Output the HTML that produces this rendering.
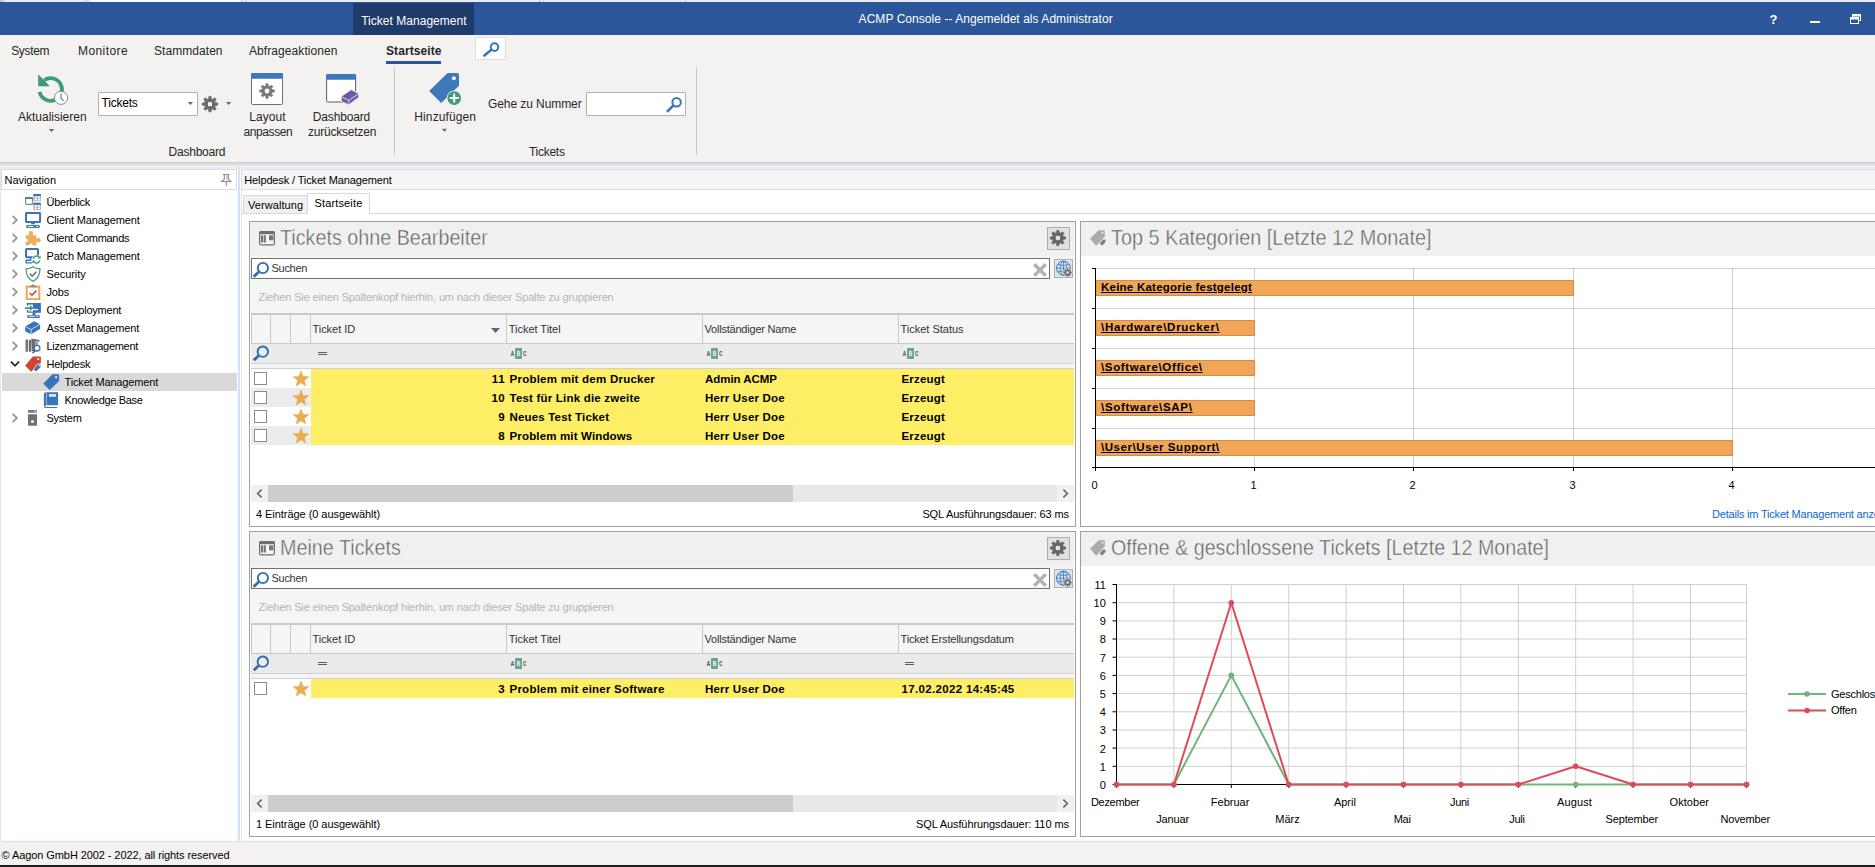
<!DOCTYPE html>
<html lang="de"><head><meta charset="utf-8"><title>ACMP Console</title>
<style>
html,body{margin:0;padding:0;}
body{width:1875px;height:867px;overflow:hidden;position:relative;background:#fff;font-family:"Liberation Sans",sans-serif;font-size:11px;color:#000;}
#app{position:absolute;left:0;top:0;width:1875px;height:867px;overflow:hidden;}
#app div,#app svg,#app span{position:absolute;}
#app span{white-space:nowrap;}
</style></head>
<body><div id="app">
<div style="left:0px;top:0px;width:1875px;height:2px;background:#e9ebee;"></div>
<div style="left:91px;top:0px;width:150px;height:2px;background:#ffffff;"></div>
<div style="left:86px;top:0px;width:1px;height:2px;background:#b9bcc0;"></div>
<div style="left:241px;top:0px;width:1px;height:2px;background:#b9bcc0;"></div>
<div style="left:245px;top:0px;width:1px;height:2px;background:#c9ccd0;"></div>
<div style="left:0px;top:0px;width:4px;height:2px;background:#c9ccd0;"></div>
<div style="left:539px;top:0px;width:1px;height:2px;background:#b9bcc0;"></div>
<div style="left:543px;top:0px;width:1px;height:2px;background:#c9ccd0;"></div>
<div style="left:685px;top:0px;width:1px;height:2px;background:#c3c6ca;"></div>
<div style="left:0px;top:2px;width:1875px;height:33px;background:#2b579a;"></div>
<div style="left:353px;top:3px;width:121px;height:32px;background:#1f3b6b;"></div>
<span style="top:12px;font-size:12px;line-height:18px;color:#fff;letter-spacing:0.027px;left:361.2px;">Ticket Management</span>
<span style="top:10px;font-size:12px;line-height:18px;color:#fff;letter-spacing:0.050px;left:858.6px;">ACMP Console -- Angemeldet als Administrator</span>
<span style="top:10px;font-size:13px;line-height:19px;font-weight:bold;color:#fff;left:1273.6px;width:1000px;text-align:center;">?</span>
<div style="left:1810px;top:21px;width:10px;height:2px;background:#fff;"></div>
<svg style="left:1850px;top:14px;" width="11" height="10" viewBox="0 0 11 10"><rect x="2.5" y="0.5" width="8" height="6" fill="none" stroke="#fff"/><rect x="2.5" y="0.5" width="8" height="2" fill="#fff"/><rect x="0.5" y="3.5" width="8" height="6" fill="#2b579a" stroke="#fff"/><rect x="0.5" y="3.5" width="8" height="2" fill="#fff"/></svg>
<div style="left:0px;top:35px;width:1875px;height:127px;background:#f3f2f1;"></div>
<div style="left:0px;top:162px;width:1875px;height:1px;background:#cfcfcf;"></div>
<div style="left:0px;top:163px;width:1875px;height:1px;background:#d6d6d6;"></div>
<div style="left:0px;top:164px;width:1875px;height:1px;background:#dedede;"></div>
<div style="left:0px;top:165px;width:1875px;height:1px;background:#e6e6e6;"></div>
<div style="left:0px;top:166px;width:1875px;height:1px;background:#eeeeee;"></div>
<div style="left:0px;top:167px;width:1875px;height:2px;background:#e4effa;"></div>
<span style="top:42px;font-size:12px;line-height:18px;color:#262626;letter-spacing:-0.319px;left:11.2px;">System</span>
<span style="top:42px;font-size:12px;line-height:18px;color:#262626;letter-spacing:0.427px;left:78px;">Monitore</span>
<span style="top:42px;font-size:12px;line-height:18px;color:#262626;letter-spacing:0.055px;left:154px;">Stammdaten</span>
<span style="top:42px;font-size:12px;line-height:18px;color:#262626;letter-spacing:0.080px;left:249px;">Abfrageaktionen</span>
<span style="top:42px;font-size:12px;line-height:18px;font-weight:bold;color:#262626;letter-spacing:0.090px;left:386px;">Startseite</span>
<div style="left:386px;top:61px;width:55px;height:3px;background:#2b579a;"></div>
<div style="left:475px;top:37px;width:31px;height:23px;background:#fff;border:1px solid #e1dfdd;box-sizing:border-box;"></div>
<div style="left:394px;top:67px;width:1px;height:88px;background:#c8c6c4;"></div>
<div style="left:696px;top:67px;width:1px;height:88px;background:#c8c6c4;"></div>
<span style="top:108px;font-size:12px;line-height:18px;color:#262626;letter-spacing:-0.008px;left:18px;">Aktualisieren</span>
<span style="top:108px;font-size:12px;line-height:18px;color:#262626;letter-spacing:0.045px;left:249.3px;">Layout</span>
<span style="top:123px;font-size:12px;line-height:18px;color:#262626;letter-spacing:-0.381px;left:243.4px;">anpassen</span>
<span style="top:108px;font-size:12px;line-height:18px;color:#262626;letter-spacing:-0.158px;left:312.8px;">Dashboard</span>
<span style="top:123px;font-size:12px;line-height:18px;color:#262626;letter-spacing:-0.217px;left:308px;">zurücksetzen</span>
<span style="top:143px;font-size:12px;line-height:18px;color:#262626;letter-spacing:-0.213px;left:168.5px;">Dashboard</span>
<span style="top:108px;font-size:12px;line-height:18px;color:#262626;letter-spacing:0.108px;left:414.3px;">Hinzufügen</span>
<span style="top:95px;font-size:12px;line-height:18px;color:#262626;letter-spacing:-0.079px;left:488px;">Gehe zu Nummer</span>
<span style="top:143px;font-size:12px;line-height:18px;color:#262626;letter-spacing:-0.280px;left:529px;">Tickets</span>
<div style="left:98px;top:92px;width:100px;height:24px;background:#fff;border:1px solid #b3b0ad;box-sizing:border-box;"></div>
<span style="top:94px;font-size:12px;line-height:18px;letter-spacing:-0.209px;left:101.5px;">Tickets</span>
<div style="left:586px;top:92px;width:100px;height:24px;background:#fff;border:1px solid #b3b0ad;box-sizing:border-box;"></div>
<svg style="left:475px;top:37px;" width="31" height="23" viewBox="0 0 31 23"><circle cx="19.5" cy="10.1" r="3.8" fill="none" stroke="#3b73b9" stroke-width="2.0"/><line x1="16.34" y1="12.71" x2="8.5" y2="19.2" stroke="#3b73b9" stroke-width="2.6" stroke-linecap="butt"/></svg>
<svg style="left:36px;top:72px;" width="36" height="36" viewBox="0 0 36 36"><path d="M3.6,19.8A11.3,11.3 0 1 0 8.2,8.2" fill="none" stroke="#3f9a76" stroke-width="3.8"/><path d="M2.2,2.2V14.2H13.8Z" fill="#3f9a76"/><circle cx="25" cy="25.8" r="6.6" fill="#fff" stroke="#8a8a8a" stroke-width="1"/><path d="M25,21.6V26.2L27.6,29" fill="none" stroke="#3b73b9" stroke-width="1.1"/></svg>
<svg style="left:40px;top:124px" width="24" height="12" viewBox="0 0 24 12"><path d="M8.8,5.0H14.2L11.5,8.0Z" fill="#6a6a6a"/></svg>
<svg style="left:184px;top:98px;" width="12" height="12" viewBox="0 0 12 12"><path d="M3.7,4.0H9.100000000000001L6.4,7.0Z" fill="#6a6a6a"/></svg>
<svg style="left:200px;top:94px;" width="20" height="20" viewBox="0 0 20 20"><path d="M8.77,4.74 L8.90,2.38 L11.10,2.38 L11.23,4.74 L12.92,5.44 L14.68,3.86 L16.24,5.42 L14.66,7.18 L15.36,8.87 L17.72,9.00 L17.72,11.20 L15.36,11.33 L14.66,13.02 L16.24,14.78 L14.68,16.34 L12.92,14.76 L11.23,15.46 L11.10,17.82 L8.90,17.82 L8.77,15.46 L7.08,14.76 L5.32,16.34 L3.76,14.78 L5.34,13.02 L4.64,11.33 L2.28,11.20 L2.28,9.00 L4.64,8.87 L5.34,7.18 L3.76,5.42 L5.32,3.86 L7.08,5.44Z" fill="#6b6b6b" stroke="#6b6b6b" stroke-width="0.8" stroke-linejoin="round"/><circle cx="10" cy="10.1" r="5.50" fill="#6b6b6b"/><rect x="8" y="8.1" width="4" height="4" fill="#f3f2f1"/></svg>
<svg style="left:222px;top:98px;" width="12" height="12" viewBox="0 0 12 12"><path d="M3.8999999999999995,4.0H9.3L6.6,7.0Z" fill="#6a6a6a"/></svg>
<svg style="left:250px;top:72px;" width="34" height="34" viewBox="0 0 34 34"><rect x="1.5" y="1.5" width="31" height="31" rx="1.2" fill="#fff" stroke="#6e6e6e" stroke-width="1"/><path d="M1,2.2Q1,1 2.2,1H31.8Q33,1 33,2.2V6.7H1Z" fill="#3d78ba"/><path d="M15.84,13.93 L15.97,11.77 L18.03,11.77 L18.16,13.93 L19.76,14.59 L21.38,13.16 L22.84,14.62 L21.41,16.24 L22.07,17.84 L24.23,17.97 L24.23,20.03 L22.07,20.16 L21.41,21.76 L22.84,23.38 L21.38,24.84 L19.76,23.41 L18.16,24.07 L18.03,26.23 L15.97,26.23 L15.84,24.07 L14.24,23.41 L12.62,24.84 L11.16,23.38 L12.59,21.76 L11.93,20.16 L9.77,20.03 L9.77,17.97 L11.93,17.84 L12.59,16.24 L11.16,14.62 L12.62,13.16 L14.24,14.59Z" fill="#7a7a7a" stroke="#7a7a7a" stroke-width="0.8" stroke-linejoin="round"/><circle cx="17" cy="19" r="5.20" fill="#7a7a7a"/><circle cx="17" cy="19" r="2.4" fill="#fff"/></svg>
<svg style="left:325px;top:72px;" width="36" height="36" viewBox="0 0 36 36"><rect x="1.6" y="2.5" width="29" height="27.5" fill="#fff"/><path d="M18,30H2.8Q1.6,30 1.6,28.8V4M30.6,4V19.5" fill="none" stroke="#5a5a5a" stroke-width="1"/><rect x="22" y="26" width="10" height="5" fill="#f3f2f1"/><rect x="28" y="24" width="4" height="3" fill="#f3f2f1"/><path d="M1.1,3.2Q1.1,2 2.3,2H29.9Q31.1,2 31.1,3.2V7.7H1.1Z" fill="#3d78ba"/><path d="M16.2,24.5L26.2,17.6L33.8,21.6V25.4L23.8,32.9L16.2,29.4Z" fill="#6f5aa8" stroke="#f3f2f1" stroke-width="0.9"/><path d="M16.2,24.5L23.8,28.4L33.8,21.6M23.8,28.4V32.9" fill="none" stroke="#e9e4f5" stroke-width="0.9"/></svg>
<svg style="left:427px;top:71px;" width="38" height="38" viewBox="0 0 38 38"><path d="M20.6,2.1H30.2Q32,2.1 32,3.9V14.8L14.2,32L2.2,19.9Z" fill="#3d78ba"/><circle cx="26.9" cy="7.2" r="2" fill="#f3f2f1"/><circle cx="27.2" cy="27.1" r="7.6" fill="#f3f2f1"/><circle cx="27.2" cy="27.1" r="6.8" fill="#3f9a76"/><path d="M27.2,22.6V31.6M22.7,27.1H31.7" stroke="#fff" stroke-width="2"/></svg>
<svg style="left:433px;top:124px" width="24" height="12" viewBox="0 0 24 12"><path d="M8.7,4.8H14.100000000000001L11.4,7.8Z" fill="#6a6a6a"/></svg>
<svg style="left:664px;top:94px;" width="22" height="22" viewBox="0 0 22 22"><circle cx="12.6" cy="8.2" r="4.2" fill="none" stroke="#3b73b9" stroke-width="2.0"/><line x1="9.42" y1="11.38" x2="3" y2="17.8" stroke="#3b73b9" stroke-width="2.6" stroke-linecap="butt"/></svg>
<div style="left:1px;top:169px;width:236px;height:21px;background:#fff;border:1px solid #dcdcdc;box-sizing:border-box;"></div>
<span style="top:172px;font-size:11px;line-height:16px;letter-spacing:-0.048px;left:4.5px;">Navigation</span>
<div style="left:238px;top:167px;width:2px;height:674px;background:#cfe4f9;"></div>
<div style="left:0px;top:167px;width:1px;height:674px;background:#dbe9f7;"></div>
<div style="left:2px;top:373px;width:235px;height:18px;background:#d9d9d9;"></div>
<span style="top:194px;font-size:11px;line-height:16px;letter-spacing:-0.251px;left:46.5px;">Überblick</span>
<svg style="left:25px;top:194px;" width="16" height="16" viewBox="0 0 16 16"><rect x="0.6" y="3.9" width="6.8" height="6.5" rx="0.6" fill="#fff" stroke="#858585" stroke-width="1.1"/><path d="M0,5V4Q0,3.2 0.8,3.2H7.2Q8,3.2 8,4V5Z" fill="#3a76ba"/><rect x="8.2" y="0.1" width="7.8" height="7.2" rx="0.7" fill="#b4b4b4"/><path d="M8.2,2.1V0.9Q8.2,0.1 9,0.1H15.2Q16,0.1 16,0.9V2.1Z" fill="#3a76ba"/><rect x="9.7" y="2.5" width="2.2" height="1.6" fill="#fff"/><rect x="12.9" y="2.5" width="2.2" height="1.6" fill="#fff"/><rect x="9.7" y="4.8999999999999995" width="2.2" height="1.5" fill="#fff"/><rect x="12.9" y="4.8999999999999995" width="2.2" height="1.5" fill="#fff"/><rect x="8.2" y="8.8" width="7.8" height="7.2" rx="0.7" fill="#b4b4b4"/><path d="M8.2,10.8V9.600000000000001Q8.2,8.8 9,8.8H15.2Q16,8.8 16,9.600000000000001V10.8Z" fill="#3a76ba"/><rect x="9.7" y="11.200000000000001" width="2.2" height="1.6" fill="#fff"/><rect x="12.9" y="11.200000000000001" width="2.2" height="1.6" fill="#fff"/><rect x="9.7" y="13.600000000000001" width="2.2" height="1.5" fill="#fff"/><rect x="12.9" y="13.600000000000001" width="2.2" height="1.5" fill="#fff"/></svg>
<span style="top:212px;font-size:11px;line-height:16px;letter-spacing:-0.135px;left:46.5px;">Client Management</span>
<svg style="left:25px;top:212px;" width="16" height="16" viewBox="0 0 16 16"><rect x="1" y="1.1" width="14.1" height="8.9" rx="0.4" fill="#fff" stroke="#3a74b8" stroke-width="2"/><rect x="6.2" y="11" width="3.6" height="1.3" fill="#3a74b8"/><rect x="1" y="13" width="13.9" height="3" rx="1.5" fill="#3a74b8"/><rect x="2.6" y="14.1" width="6" height="0.9" rx="0.4" fill="#fff"/><rect x="11" y="14.1" width="2" height="0.9" rx="0.4" fill="#fff"/></svg>
<svg style="left:11px;top:214px;" width="8" height="12" viewBox="0 0 8 12"><path d="M1.6,1.8L5.9,6L1.6,10.2" fill="none" stroke="#9a9a9a" stroke-width="1.8"/></svg>
<span style="top:230px;font-size:11px;line-height:16px;letter-spacing:-0.321px;left:46.5px;">Client Commands</span>
<svg style="left:25px;top:230px;" width="16" height="16" viewBox="0 0 16 16"><rect x="0.6" y="5.2" width="10.8" height="10.4" rx="0.8" fill="#e8b15c"/><circle cx="6" cy="3.4" r="2.3" fill="#e8b15c"/><rect x="4.8" y="4" width="2.4" height="2" fill="#e8b15c"/><circle cx="13.3" cy="10.2" r="2.3" fill="#e8b15c"/><rect x="11" y="9" width="2" height="2.4" fill="#e8b15c"/><circle cx="1" cy="10.3" r="1.7" fill="#fff"/><circle cx="6" cy="15.4" r="1.8" fill="#fff"/></svg>
<svg style="left:11px;top:232px;" width="8" height="12" viewBox="0 0 8 12"><path d="M1.6,1.8L5.9,6L1.6,10.2" fill="none" stroke="#9a9a9a" stroke-width="1.8"/></svg>
<span style="top:248px;font-size:11px;line-height:16px;letter-spacing:-0.143px;left:46.5px;">Patch Management</span>
<svg style="left:25px;top:248px;" width="16" height="16" viewBox="0 0 16 16"><rect x="1" y="1" width="12" height="8.2" rx="0.8" fill="#fff" stroke="#3a74b8" stroke-width="2"/><path d="M5.6,10V12.3H1.2V14.9H7" fill="none" stroke="#3a74b8" stroke-width="1.4"/><circle cx="11.5" cy="11.5" r="4.6" fill="#fff"/><path d="M8.3,10.6A3.4,3.4 0 0 1 14.2,9.2" fill="none" stroke="#3f9a6e" stroke-width="1.5"/><path d="M15.6,7.6V10.6H12.6Z" fill="#3f9a6e"/><path d="M14.7,12.4A3.4,3.4 0 0 1 8.8,13.8" fill="none" stroke="#3f9a6e" stroke-width="1.5"/><path d="M7.4,15.4V12.4H10.4Z" fill="#3f9a6e"/></svg>
<svg style="left:11px;top:250px;" width="8" height="12" viewBox="0 0 8 12"><path d="M1.6,1.8L5.9,6L1.6,10.2" fill="none" stroke="#9a9a9a" stroke-width="1.8"/></svg>
<span style="top:266px;font-size:11px;line-height:16px;letter-spacing:-0.081px;left:46.5px;">Security</span>
<svg style="left:25px;top:266px;" width="16" height="16" viewBox="0 0 16 16"><path d="M8,0.8C10,2.3 12.4,2.8 15,2.8C15,9 12.2,13.2 8,15.3C3.8,13.2 1,9 1,2.8C3.6,2.8 6,2.3 8,0.8Z" fill="#fff" stroke="#3f9a6e" stroke-width="1.2"/><path d="M4.8,7.8L7.2,10.2L11.4,5.8" fill="none" stroke="#6a6a6a" stroke-width="1.5"/></svg>
<svg style="left:11px;top:268px;" width="8" height="12" viewBox="0 0 8 12"><path d="M1.6,1.8L5.9,6L1.6,10.2" fill="none" stroke="#9a9a9a" stroke-width="1.8"/></svg>
<span style="top:284px;font-size:11px;line-height:16px;letter-spacing:-0.162px;left:46.5px;">Jobs</span>
<svg style="left:25px;top:284px;" width="16" height="16" viewBox="0 0 16 16"><rect x="1.7" y="2.6" width="12.6" height="12.6" fill="#fff" stroke="#e8a94e" stroke-width="2"/><path d="M4,3.3L5.6,1.5H6.9V0.5H9.1V1.5H10.4L12,3.3Z" fill="#8a8a8a"/><path d="M4.8,9L7,11.2L11.4,6.6" fill="none" stroke="#d0402e" stroke-width="1.6"/></svg>
<svg style="left:11px;top:286px;" width="8" height="12" viewBox="0 0 8 12"><path d="M1.6,1.8L5.9,6L1.6,10.2" fill="none" stroke="#9a9a9a" stroke-width="1.8"/></svg>
<span style="top:302px;font-size:11px;line-height:16px;letter-spacing:-0.235px;left:46.5px;">OS Deployment</span>
<svg style="left:25px;top:302px;" width="16" height="16" viewBox="0 0 16 16"><rect x="8" y="1" width="7.9" height="9.8" fill="#3a74b8"/><rect x="1.8" y="1" width="7" height="1.6" fill="#3a74b8"/><rect x="1.8" y="1" width="1.2" height="2.6" fill="#3a74b8"/><path d="M1.8,8V9.6Q1.8,10.8 3,10.8H8.5V9.5H3.2V8Z" fill="#3a74b8"/><rect x="8" y="6.9" width="5" height="1.3" fill="#fff"/><rect x="7.5" y="10.8" width="3" height="2.5" fill="#3a74b8"/><rect x="2" y="13.2" width="13" height="2.8" rx="1.4" fill="#3a74b8"/><rect x="4" y="14.2" width="6" height="0.9" rx="0.4" fill="#fff"/><rect x="11.4" y="14.2" width="1.8" height="0.9" rx="0.4" fill="#fff"/><path d="M0,5.3H4.8V3L8.3,6.1L4.8,9.3V7H0Z" fill="#3f9a6e"/></svg>
<svg style="left:11px;top:304px;" width="8" height="12" viewBox="0 0 8 12"><path d="M1.6,1.8L5.9,6L1.6,10.2" fill="none" stroke="#9a9a9a" stroke-width="1.8"/></svg>
<span style="top:320px;font-size:11px;line-height:16px;letter-spacing:-0.136px;left:46.5px;">Asset Management</span>
<svg style="left:25px;top:320px;" width="16" height="16" viewBox="0 0 16 16"><path d="M0.1,6.5L9.1,1.2L15.1,4.2V8.9L6.1,14.2L0.1,11.2Z" fill="#3a74b8"/><path d="M0.1,6.5L6.1,9.5L15.1,4.2M6.1,9.5V14.2" fill="none" stroke="#e6eef8" stroke-width="0.8"/></svg>
<svg style="left:11px;top:322px;" width="8" height="12" viewBox="0 0 8 12"><path d="M1.6,1.8L5.9,6L1.6,10.2" fill="none" stroke="#9a9a9a" stroke-width="1.8"/></svg>
<span style="top:338px;font-size:11px;line-height:16px;letter-spacing:-0.276px;left:46.5px;">Lizenzmanagement</span>
<svg style="left:25px;top:338px;" width="16" height="16" viewBox="0 0 16 16"><path d="M0.5,2.1L1.75,0.9L3,2.1V13.7H0.5Z" fill="#777"/><rect x="3.8" y="2" width="2.5" height="11.7" fill="#6c6c6c"/><path d="M6.3,0.5L14.5,2V3.7L10.5,3.3V13H6.9Z" fill="#6c6c6c"/><rect x="10.5" y="4" width="2.4" height="4" fill="#9a9a9a"/><circle cx="12.1" cy="10.2" r="2.8" fill="#fff" stroke="#3a74b8" stroke-width="1.3"/><line x1="10.2" y1="12.3" x2="7.6" y2="15.2" stroke="#3a74b8" stroke-width="1.9"/></svg>
<svg style="left:11px;top:340px;" width="8" height="12" viewBox="0 0 8 12"><path d="M1.6,1.8L5.9,6L1.6,10.2" fill="none" stroke="#9a9a9a" stroke-width="1.8"/></svg>
<span style="top:356px;font-size:11px;line-height:16px;letter-spacing:-0.282px;left:46.5px;">Helpdesk</span>
<svg style="left:25px;top:356px;" width="16" height="16" viewBox="0 0 16 16"><path d="M7.8,0.4H14.9Q15.9,0.4 15.9,1.4V6.8L6.1,15.7L0.1,9.8Z" fill="#d0452f"/><rect x="12.3" y="2.2" width="1.9" height="1.9" rx="0.5" fill="#fff"/><path d="M12.5,8H15.9V11.5L10.8,15.9L8.5,13.5Z" fill="#3a74b8" stroke="#fff" stroke-width="0.8"/><circle cx="14.5" cy="9.7" r="0.65" fill="#fff"/></svg>
<svg style="left:9px;top:360px;" width="12" height="8" viewBox="0 0 12 8"><path d="M1.9,1.6L6,5.8L10.1,1.6" fill="none" stroke="#2b2b2b" stroke-width="1.8"/></svg>
<span style="top:374px;font-size:11px;line-height:16px;letter-spacing:-0.153px;left:64.5px;">Ticket Management</span>
<svg style="left:43px;top:374px;" width="17" height="17" viewBox="0 0 17 17"><path d="M9.4,0.2H15Q16.1,0.2 16.1,1.3V6.9L6.7,16.1L0.2,9.7Z" fill="#3a74b8"/><rect x="12" y="2.2" width="2.1" height="2.1" rx="0.5" fill="#ededed"/></svg>
<span style="top:392px;font-size:11px;line-height:16px;letter-spacing:-0.319px;left:64.5px;">Knowledge Base</span>
<svg style="left:43px;top:392px;" width="17" height="17" viewBox="0 0 17 17"><path d="M0.9,2.2Q0.9,0.2 2.9,0.2H15.1V13.2H3.2Q2.2,13.2 2.2,14.1T3.2,15H14.2V16H2.9Q0.9,16 0.9,14Z" fill="#3a74b8"/><rect x="6" y="2" width="7" height="2.8" fill="#d8e6f4"/><rect x="3" y="0.4" width="0.8" height="12.8" fill="#fff" opacity="0.6"/></svg>
<span style="top:410px;font-size:11px;line-height:16px;letter-spacing:-0.265px;left:46.5px;">System</span>
<svg style="left:25px;top:410px;" width="16" height="16" viewBox="0 0 16 16"><rect x="3" y="0.1" width="9" height="2.7" rx="0.3" fill="#7a7a7a"/><rect x="9" y="0.9" width="2.4" height="1" fill="#d4d4d4"/><rect x="3" y="4.3" width="9" height="11.4" fill="#707070"/><circle cx="7.5" cy="11.6" r="1.5" fill="#fff"/></svg>
<svg style="left:11px;top:412px;" width="8" height="12" viewBox="0 0 8 12"><path d="M1.6,1.8L5.9,6L1.6,10.2" fill="none" stroke="#9a9a9a" stroke-width="1.8"/></svg>
<svg style="left:220px;top:173px;" width="12" height="14" viewBox="0 0 12 14"><path d="M3,1.5H9.6M4.3,1.5V6.2L1.6,8.5H11L8.3,6.2V1.5M6.3,8.5V13" fill="none" stroke="#8c8c8c" stroke-width="1.1"/><path d="M7,2.5V6.5" stroke="#b5b5b5" stroke-width="1.4"/></svg>
<div style="left:241px;top:169px;width:1640px;height:21px;background:#f5f5f5;border:1px solid #dfdfdf;box-sizing:border-box;"></div>
<span style="top:172px;font-size:11px;line-height:16px;letter-spacing:-0.133px;left:244.3px;">Helpdesk / Ticket Management</span>
<div style="left:241px;top:213px;width:1640px;height:1px;background:#d9d9d9;"></div>
<div style="left:241px;top:190px;width:1px;height:651px;background:#e4e4e4;"></div>
<div style="left:243px;top:195px;width:65px;height:18px;background:#f0f0f0;border:1px solid #d9d9d9;border-bottom:none;box-sizing:border-box;"></div>
<div style="left:307px;top:193px;width:63px;height:21px;background:#fff;border:1px solid #d9d9d9;border-bottom:none;box-sizing:border-box;"></div>
<span style="top:197px;font-size:11px;line-height:16px;letter-spacing:0.066px;left:248px;">Verwaltung</span>
<span style="top:195px;font-size:11px;line-height:16px;letter-spacing:0.143px;left:314.5px;">Startseite</span>
<div style="left:249px;top:221px;width:827px;height:306px;background:#fff;border:1px solid #a0a0a0;box-sizing:border-box;"></div>
<div style="left:250px;top:222px;width:824px;height:34px;background:#f0f0f0;"></div>
<span style="top:223px;font-size:22px;line-height:29px;color:#585858;left:279.6px;-webkit-text-stroke:0.5px #f0f0f0;transform:scaleX(0.8975);transform-origin:0 50%;">Tickets ohne Bearbeiter</span>
<div style="left:1047px;top:227px;width:23px;height:23px;background:#e1e1e1;border:1px solid #adadad;box-sizing:border-box;"></div>
<div style="left:250px;top:256px;width:824px;height:23px;background:#f5f5f5;"></div>
<div style="left:251px;top:258px;width:799px;height:21px;background:#fff;border:1px solid #707070;box-sizing:border-box;"></div>
<svg style="left:259px;top:231px;" width="16" height="15" viewBox="0 0 16 15"><rect x="0.6" y="0.6" width="14.8" height="13.2" rx="1.2" fill="#f6f6f6" stroke="#6e6e6e" stroke-width="1.2"/><rect x="0.6" y="0.6" width="14.8" height="2.6" fill="#6e6e6e"/><rect x="1.9" y="4.3" width="2.2" height="7.2" fill="#787878"/><rect x="4.7" y="4.3" width="2.2" height="7.2" fill="#787878"/><rect x="10" y="4.3" width="4.4" height="5" fill="#787878"/></svg>
<svg style="left:252px;top:260px;" width="20" height="20" viewBox="0 0 20 20"><circle cx="10.9" cy="8" r="5.1" fill="none" stroke="#2f6cb0" stroke-width="1.9"/><line x1="6.98" y1="11.71" x2="1.6" y2="16.8" stroke="#2f6cb0" stroke-width="2.8" stroke-linecap="butt"/></svg>
<svg style="left:1032px;top:262px;" width="16" height="16" viewBox="0 0 16 16"><path d="M2.2,2.2L13.8,13.8M13.8,2.2L2.2,13.8" stroke="#b2b2b2" stroke-width="3.4" fill="none"/></svg>
<div style="left:1054px;top:259px;width:19px;height:19px;background:#e3e3e3;border:1px solid #b0b0b0;box-sizing:border-box;"></div>
<svg style="left:1054px;top:259px;" width="20" height="20" viewBox="0 0 20 20"><circle cx="9.5" cy="9.2" r="7" fill="none" stroke="#2f78c8" stroke-width="1"/><ellipse cx="9.5" cy="9.2" rx="3.3" ry="7" fill="none" stroke="#2f78c8" stroke-width="0.8"/><path d="M2.5,9.2H16.5M9.5,2.2V16.2M3.8,5.6Q9.5,7.4 15.2,5.6M3.8,12.8Q9.5,11 15.2,12.8" stroke="#2f78c8" stroke-width="0.8" fill="none"/><circle cx="13.6" cy="13.5" r="4.6" fill="#e3e3e3"/><path d="M13.02,10.97 L13.06,9.74 L14.14,9.74 L14.18,10.97 L14.98,11.30 L15.88,10.46 L16.64,11.22 L15.80,12.12 L16.13,12.92 L17.36,12.96 L17.36,14.04 L16.13,14.08 L15.80,14.88 L16.64,15.78 L15.88,16.54 L14.98,15.70 L14.18,16.03 L14.14,17.26 L13.06,17.26 L13.02,16.03 L12.22,15.70 L11.32,16.54 L10.56,15.78 L11.40,14.88 L11.07,14.08 L9.84,14.04 L9.84,12.96 L11.07,12.92 L11.40,12.12 L10.56,11.22 L11.32,10.46 L12.22,11.30Z" fill="#707070" stroke="#707070" stroke-width="0.8" stroke-linejoin="round"/><circle cx="13.6" cy="13.5" r="2.60" fill="#707070"/><circle cx="13.6" cy="13.5" r="1.3" fill="#e3e3e3"/></svg>
<svg style="left:1047px;top:227px;" width="24" height="23" viewBox="0 0 24 23"><path d="M9.67,5.64 L9.82,3.38 L11.98,3.38 L12.13,5.64 L13.82,6.34 L15.52,4.84 L17.06,6.38 L15.56,8.08 L16.26,9.77 L18.52,9.92 L18.52,12.08 L16.26,12.23 L15.56,13.92 L17.06,15.62 L15.52,17.16 L13.82,15.66 L12.13,16.36 L11.98,18.62 L9.82,18.62 L9.67,16.36 L7.98,15.66 L6.28,17.16 L4.74,15.62 L6.24,13.92 L5.54,12.23 L3.28,12.08 L3.28,9.92 L5.54,9.77 L6.24,8.08 L4.74,6.38 L6.28,4.84 L7.98,6.34Z" fill="#666" stroke="#666" stroke-width="0.8" stroke-linejoin="round"/><circle cx="10.9" cy="11" r="5.50" fill="#666"/><rect x="8.8" y="8.9" width="4.2" height="4.2" fill="#e1e1e1"/></svg>
<div style="left:250px;top:279px;width:824px;height:35px;background:#f5f5f5;"></div>
<span style="top:289px;font-size:11px;line-height:16px;color:#b4b4b4;letter-spacing:-0.145px;left:258.5px;">Ziehen Sie einen Spaltenkopf hierhin, um nach dieser Spalte zu gruppieren</span>
<div style="left:251px;top:313px;width:823px;height:2px;background:#c9c9c9;"></div>
<div style="left:251px;top:315px;width:823px;height:28px;background:#f5f5f5;"></div>
<div style="left:251px;top:343px;width:823px;height:1px;background:#c9c9c9;"></div>
<div style="left:251px;top:315px;width:1px;height:28px;background:#c9c9c9;"></div>
<div style="left:270px;top:315px;width:1px;height:28px;background:#c9c9c9;"></div>
<div style="left:290px;top:315px;width:1px;height:28px;background:#c9c9c9;"></div>
<div style="left:310px;top:315px;width:1px;height:28px;background:#c9c9c9;"></div>
<div style="left:506px;top:315px;width:1px;height:28px;background:#c9c9c9;"></div>
<div style="left:702px;top:315px;width:1px;height:28px;background:#c9c9c9;"></div>
<div style="left:898px;top:315px;width:1px;height:28px;background:#c9c9c9;"></div>
<span style="top:321px;font-size:11px;line-height:16px;color:#333;letter-spacing:-0.044px;left:312.5px;">Ticket ID</span>
<span style="top:321px;font-size:11px;line-height:16px;color:#333;letter-spacing:-0.031px;left:508.8px;">Ticket Titel</span>
<span style="top:321px;font-size:11px;line-height:16px;color:#333;letter-spacing:-0.211px;left:704.5px;">Vollständiger Name</span>
<span style="top:321px;font-size:11px;line-height:16px;color:#333;letter-spacing:-0.006px;left:900.5px;">Ticket Status</span>
<svg style="left:491px;top:328px;" width="9" height="5" viewBox="0 0 9 5"><path d="M0,0H9L4.5,5Z" fill="#666"/></svg>
<div style="left:251px;top:344px;width:823px;height:19px;background:#ebebeb;"></div>
<div style="left:251px;top:363px;width:823px;height:1px;background:#d0d0d0;"></div>
<div style="left:251px;top:364px;width:823px;height:4px;background:#f5f5f5;"></div>
<div style="left:251px;top:368px;width:823px;height:1px;background:#cfcfcf;"></div>
<svg style="left:510px;top:347px;" width="18" height="13" viewBox="0 0 18 13"><rect x="5" y="1" width="7" height="11" rx="0.8" fill="#6ba391"/><text x="0.8" y="9" font-family="Liberation Mono, monospace" font-weight="bold" font-size="7.4" fill="#555" textLength="3.4" lengthAdjust="spacingAndGlyphs">A</text><text x="6.8" y="9" font-family="Liberation Mono, monospace" font-weight="bold" font-size="7.4" fill="#eef5f2" textLength="3.4" lengthAdjust="spacingAndGlyphs">B</text><text x="12.9" y="9" font-family="Liberation Mono, monospace" font-weight="bold" font-size="7.4" fill="#555" textLength="3.4" lengthAdjust="spacingAndGlyphs">C</text></svg>
<svg style="left:706px;top:347px;" width="18" height="13" viewBox="0 0 18 13"><rect x="5" y="1" width="7" height="11" rx="0.8" fill="#6ba391"/><text x="0.8" y="9" font-family="Liberation Mono, monospace" font-weight="bold" font-size="7.4" fill="#555" textLength="3.4" lengthAdjust="spacingAndGlyphs">A</text><text x="6.8" y="9" font-family="Liberation Mono, monospace" font-weight="bold" font-size="7.4" fill="#eef5f2" textLength="3.4" lengthAdjust="spacingAndGlyphs">B</text><text x="12.9" y="9" font-family="Liberation Mono, monospace" font-weight="bold" font-size="7.4" fill="#555" textLength="3.4" lengthAdjust="spacingAndGlyphs">C</text></svg>
<svg style="left:902px;top:347px;" width="18" height="13" viewBox="0 0 18 13"><rect x="5" y="1" width="7" height="11" rx="0.8" fill="#6ba391"/><text x="0.8" y="9" font-family="Liberation Mono, monospace" font-weight="bold" font-size="7.4" fill="#555" textLength="3.4" lengthAdjust="spacingAndGlyphs">A</text><text x="6.8" y="9" font-family="Liberation Mono, monospace" font-weight="bold" font-size="7.4" fill="#eef5f2" textLength="3.4" lengthAdjust="spacingAndGlyphs">B</text><text x="12.9" y="9" font-family="Liberation Mono, monospace" font-weight="bold" font-size="7.4" fill="#555" textLength="3.4" lengthAdjust="spacingAndGlyphs">C</text></svg>
<div style="left:311px;top:369px;width:763px;height:19px;background:#fdee66;"></div>
<span style="top:371px;font-size:11.5px;line-height:16px;font-weight:bold;letter-spacing:0.714px;right:1369.59px;">11</span>
<span style="top:371px;font-size:11.5px;line-height:16px;font-weight:bold;letter-spacing:0.245px;left:509.5px;">Problem mit dem Drucker</span>
<span style="top:371px;font-size:11.5px;line-height:16px;font-weight:bold;letter-spacing:-0.051px;left:705px;">Admin ACMP</span>
<span style="top:371px;font-size:11.5px;line-height:16px;font-weight:bold;letter-spacing:0.204px;left:901.5px;">Erzeugt</span>
<div style="left:254px;top:372px;width:13px;height:13px;background:#fff;border:1px solid #8c8c8c;box-sizing:border-box;"></div>
<svg style="left:292px;top:370px;" width="18" height="17" viewBox="0 0 18 17"><path d="M9.00,1.10 L11.06,6.47 L16.80,6.77 L12.33,10.38 L13.82,15.93 L9.00,12.80 L4.18,15.93 L5.67,10.38 L1.20,6.77 L6.94,6.47Z" fill="#e8ad4e" stroke="#e8ad4e" stroke-width="0.6" stroke-linejoin="round"/></svg>
<div style="left:251px;top:388px;width:60px;height:19px;background:#ececec;"></div>
<div style="left:311px;top:388px;width:763px;height:19px;background:#fdee66;"></div>
<span style="top:390px;font-size:11.5px;line-height:16px;font-weight:bold;letter-spacing:0.402px;right:1369.9px;">10</span>
<span style="top:390px;font-size:11.5px;line-height:16px;font-weight:bold;letter-spacing:0.205px;left:509.5px;">Test für Link die zweite</span>
<span style="top:390px;font-size:11.5px;line-height:16px;font-weight:bold;letter-spacing:0.197px;left:705px;">Herr User Doe</span>
<span style="top:390px;font-size:11.5px;line-height:16px;font-weight:bold;letter-spacing:0.204px;left:901.5px;">Erzeugt</span>
<div style="left:254px;top:391px;width:13px;height:13px;background:#fff;border:1px solid #8c8c8c;box-sizing:border-box;"></div>
<svg style="left:292px;top:389px;" width="18" height="17" viewBox="0 0 18 17"><path d="M9.00,1.10 L11.06,6.47 L16.80,6.77 L12.33,10.38 L13.82,15.93 L9.00,12.80 L4.18,15.93 L5.67,10.38 L1.20,6.77 L6.94,6.47Z" fill="#e8ad4e" stroke="#e8ad4e" stroke-width="0.6" stroke-linejoin="round"/></svg>
<div style="left:311px;top:407px;width:763px;height:19px;background:#fdee66;"></div>
<span style="top:409px;font-size:11.5px;line-height:16px;font-weight:bold;letter-spacing:0.694px;right:1369.61px;">9</span>
<span style="top:409px;font-size:11.5px;line-height:16px;font-weight:bold;letter-spacing:0.174px;left:509.5px;">Neues Test Ticket</span>
<span style="top:409px;font-size:11.5px;line-height:16px;font-weight:bold;letter-spacing:0.197px;left:705px;">Herr User Doe</span>
<span style="top:409px;font-size:11.5px;line-height:16px;font-weight:bold;letter-spacing:0.204px;left:901.5px;">Erzeugt</span>
<div style="left:254px;top:410px;width:13px;height:13px;background:#fff;border:1px solid #8c8c8c;box-sizing:border-box;"></div>
<svg style="left:292px;top:408px;" width="18" height="17" viewBox="0 0 18 17"><path d="M9.00,1.10 L11.06,6.47 L16.80,6.77 L12.33,10.38 L13.82,15.93 L9.00,12.80 L4.18,15.93 L5.67,10.38 L1.20,6.77 L6.94,6.47Z" fill="#e8ad4e" stroke="#e8ad4e" stroke-width="0.6" stroke-linejoin="round"/></svg>
<div style="left:251px;top:426px;width:60px;height:19px;background:#ececec;"></div>
<div style="left:311px;top:426px;width:763px;height:19px;background:#fdee66;"></div>
<span style="top:428px;font-size:11.5px;line-height:16px;font-weight:bold;letter-spacing:0.694px;right:1369.61px;">8</span>
<span style="top:428px;font-size:11.5px;line-height:16px;font-weight:bold;letter-spacing:0.152px;left:509.5px;">Problem mit Windows</span>
<span style="top:428px;font-size:11.5px;line-height:16px;font-weight:bold;letter-spacing:0.197px;left:705px;">Herr User Doe</span>
<span style="top:428px;font-size:11.5px;line-height:16px;font-weight:bold;letter-spacing:0.204px;left:901.5px;">Erzeugt</span>
<div style="left:254px;top:429px;width:13px;height:13px;background:#fff;border:1px solid #8c8c8c;box-sizing:border-box;"></div>
<svg style="left:292px;top:427px;" width="18" height="17" viewBox="0 0 18 17"><path d="M9.00,1.10 L11.06,6.47 L16.80,6.77 L12.33,10.38 L13.82,15.93 L9.00,12.80 L4.18,15.93 L5.67,10.38 L1.20,6.77 L6.94,6.47Z" fill="#e8ad4e" stroke="#e8ad4e" stroke-width="0.6" stroke-linejoin="round"/></svg>
<div style="left:251px;top:485px;width:823px;height:17px;background:#e8e8e8;"></div>
<div style="left:251px;top:485px;width:17px;height:17px;background:#f0f0f0;"></div>
<div style="left:1057px;top:485px;width:17px;height:17px;background:#f0f0f0;"></div>
<div style="left:268px;top:485px;width:525px;height:17px;background:#cdcdcd;"></div>
<span style="top:506px;font-size:11px;line-height:16px;letter-spacing:-0.050px;left:256px;">4 Einträge (0 ausgewählt)</span>
<span style="top:506px;font-size:11px;line-height:16px;letter-spacing:-0.130px;left:922.4px;">SQL Ausführungsdauer: 63 ms</span>
<svg style="left:252px;top:343px;" width="20" height="20" viewBox="0 0 20 20"><circle cx="10.8" cy="8.7" r="5.2" fill="none" stroke="#2f6cb0" stroke-width="1.9"/><line x1="6.82" y1="12.50" x2="1.8" y2="17.3" stroke="#2f6cb0" stroke-width="2.8" stroke-linecap="butt"/></svg>
<svg style="left:318px;top:351px;" width="10" height="6" viewBox="0 0 10 6"><path d="M0,1.5H9M0,3.5H9" stroke="#5e5e5e" stroke-width="1" fill="none"/></svg>
<svg style="left:251px;top:485px;" width="17" height="17" viewBox="0 0 17 17"><path d="M10.6,4.6L6.6,8.5L10.6,12.4" fill="none" stroke="#606060" stroke-width="1.5"/></svg>
<svg style="left:1057px;top:485px;" width="17" height="17" viewBox="0 0 17 17"><path d="M6.4,4.6L10.4,8.5L6.4,12.4" fill="none" stroke="#606060" stroke-width="1.5"/></svg>
<span style="top:260px;font-size:11px;line-height:16px;color:#333;letter-spacing:-0.285px;left:271.5px;">Suchen</span>
<div style="left:249px;top:531px;width:827px;height:306px;background:#fff;border:1px solid #a0a0a0;box-sizing:border-box;"></div>
<div style="left:250px;top:532px;width:824px;height:34px;background:#f0f0f0;"></div>
<span style="top:533px;font-size:22px;line-height:29px;color:#585858;left:279.6px;-webkit-text-stroke:0.5px #f0f0f0;transform:scaleX(0.8981);transform-origin:0 50%;">Meine Tickets</span>
<div style="left:1047px;top:537px;width:23px;height:23px;background:#e1e1e1;border:1px solid #adadad;box-sizing:border-box;"></div>
<div style="left:250px;top:566px;width:824px;height:23px;background:#f5f5f5;"></div>
<div style="left:251px;top:568px;width:799px;height:21px;background:#fff;border:1px solid #707070;box-sizing:border-box;"></div>
<svg style="left:259px;top:541px;" width="16" height="15" viewBox="0 0 16 15"><rect x="0.6" y="0.6" width="14.8" height="13.2" rx="1.2" fill="#f6f6f6" stroke="#6e6e6e" stroke-width="1.2"/><rect x="0.6" y="0.6" width="14.8" height="2.6" fill="#6e6e6e"/><rect x="1.9" y="4.3" width="2.2" height="7.2" fill="#787878"/><rect x="4.7" y="4.3" width="2.2" height="7.2" fill="#787878"/><rect x="10" y="4.3" width="4.4" height="5" fill="#787878"/></svg>
<svg style="left:252px;top:570px;" width="20" height="20" viewBox="0 0 20 20"><circle cx="10.9" cy="8" r="5.1" fill="none" stroke="#2f6cb0" stroke-width="1.9"/><line x1="6.98" y1="11.71" x2="1.6" y2="16.8" stroke="#2f6cb0" stroke-width="2.8" stroke-linecap="butt"/></svg>
<svg style="left:1032px;top:572px;" width="16" height="16" viewBox="0 0 16 16"><path d="M2.2,2.2L13.8,13.8M13.8,2.2L2.2,13.8" stroke="#b2b2b2" stroke-width="3.4" fill="none"/></svg>
<div style="left:1054px;top:569px;width:19px;height:19px;background:#e3e3e3;border:1px solid #b0b0b0;box-sizing:border-box;"></div>
<svg style="left:1054px;top:569px;" width="20" height="20" viewBox="0 0 20 20"><circle cx="9.5" cy="9.2" r="7" fill="none" stroke="#2f78c8" stroke-width="1"/><ellipse cx="9.5" cy="9.2" rx="3.3" ry="7" fill="none" stroke="#2f78c8" stroke-width="0.8"/><path d="M2.5,9.2H16.5M9.5,2.2V16.2M3.8,5.6Q9.5,7.4 15.2,5.6M3.8,12.8Q9.5,11 15.2,12.8" stroke="#2f78c8" stroke-width="0.8" fill="none"/><circle cx="13.6" cy="13.5" r="4.6" fill="#e3e3e3"/><path d="M13.02,10.97 L13.06,9.74 L14.14,9.74 L14.18,10.97 L14.98,11.30 L15.88,10.46 L16.64,11.22 L15.80,12.12 L16.13,12.92 L17.36,12.96 L17.36,14.04 L16.13,14.08 L15.80,14.88 L16.64,15.78 L15.88,16.54 L14.98,15.70 L14.18,16.03 L14.14,17.26 L13.06,17.26 L13.02,16.03 L12.22,15.70 L11.32,16.54 L10.56,15.78 L11.40,14.88 L11.07,14.08 L9.84,14.04 L9.84,12.96 L11.07,12.92 L11.40,12.12 L10.56,11.22 L11.32,10.46 L12.22,11.30Z" fill="#707070" stroke="#707070" stroke-width="0.8" stroke-linejoin="round"/><circle cx="13.6" cy="13.5" r="2.60" fill="#707070"/><circle cx="13.6" cy="13.5" r="1.3" fill="#e3e3e3"/></svg>
<svg style="left:1047px;top:537px;" width="24" height="23" viewBox="0 0 24 23"><path d="M9.67,5.64 L9.82,3.38 L11.98,3.38 L12.13,5.64 L13.82,6.34 L15.52,4.84 L17.06,6.38 L15.56,8.08 L16.26,9.77 L18.52,9.92 L18.52,12.08 L16.26,12.23 L15.56,13.92 L17.06,15.62 L15.52,17.16 L13.82,15.66 L12.13,16.36 L11.98,18.62 L9.82,18.62 L9.67,16.36 L7.98,15.66 L6.28,17.16 L4.74,15.62 L6.24,13.92 L5.54,12.23 L3.28,12.08 L3.28,9.92 L5.54,9.77 L6.24,8.08 L4.74,6.38 L6.28,4.84 L7.98,6.34Z" fill="#666" stroke="#666" stroke-width="0.8" stroke-linejoin="round"/><circle cx="10.9" cy="11" r="5.50" fill="#666"/><rect x="8.8" y="8.9" width="4.2" height="4.2" fill="#e1e1e1"/></svg>
<div style="left:250px;top:589px;width:824px;height:35px;background:#f5f5f5;"></div>
<span style="top:599px;font-size:11px;line-height:16px;color:#b4b4b4;letter-spacing:-0.145px;left:258.5px;">Ziehen Sie einen Spaltenkopf hierhin, um nach dieser Spalte zu gruppieren</span>
<div style="left:251px;top:623px;width:823px;height:2px;background:#c9c9c9;"></div>
<div style="left:251px;top:625px;width:823px;height:28px;background:#f5f5f5;"></div>
<div style="left:251px;top:653px;width:823px;height:1px;background:#c9c9c9;"></div>
<div style="left:251px;top:625px;width:1px;height:28px;background:#c9c9c9;"></div>
<div style="left:270px;top:625px;width:1px;height:28px;background:#c9c9c9;"></div>
<div style="left:290px;top:625px;width:1px;height:28px;background:#c9c9c9;"></div>
<div style="left:310px;top:625px;width:1px;height:28px;background:#c9c9c9;"></div>
<div style="left:506px;top:625px;width:1px;height:28px;background:#c9c9c9;"></div>
<div style="left:702px;top:625px;width:1px;height:28px;background:#c9c9c9;"></div>
<div style="left:898px;top:625px;width:1px;height:28px;background:#c9c9c9;"></div>
<span style="top:631px;font-size:11px;line-height:16px;color:#333;letter-spacing:-0.044px;left:312.5px;">Ticket ID</span>
<span style="top:631px;font-size:11px;line-height:16px;color:#333;letter-spacing:-0.031px;left:508.8px;">Ticket Titel</span>
<span style="top:631px;font-size:11px;line-height:16px;color:#333;letter-spacing:-0.211px;left:704.5px;">Vollständiger Name</span>
<span style="top:631px;font-size:11px;line-height:16px;color:#333;letter-spacing:-0.160px;left:900.5px;">Ticket Erstellungsdatum</span>
<div style="left:251px;top:654px;width:823px;height:19px;background:#ebebeb;"></div>
<div style="left:251px;top:673px;width:823px;height:1px;background:#d0d0d0;"></div>
<div style="left:251px;top:674px;width:823px;height:4px;background:#f5f5f5;"></div>
<div style="left:251px;top:678px;width:823px;height:1px;background:#cfcfcf;"></div>
<svg style="left:510px;top:657px;" width="18" height="13" viewBox="0 0 18 13"><rect x="5" y="1" width="7" height="11" rx="0.8" fill="#6ba391"/><text x="0.8" y="9" font-family="Liberation Mono, monospace" font-weight="bold" font-size="7.4" fill="#555" textLength="3.4" lengthAdjust="spacingAndGlyphs">A</text><text x="6.8" y="9" font-family="Liberation Mono, monospace" font-weight="bold" font-size="7.4" fill="#eef5f2" textLength="3.4" lengthAdjust="spacingAndGlyphs">B</text><text x="12.9" y="9" font-family="Liberation Mono, monospace" font-weight="bold" font-size="7.4" fill="#555" textLength="3.4" lengthAdjust="spacingAndGlyphs">C</text></svg>
<svg style="left:706px;top:657px;" width="18" height="13" viewBox="0 0 18 13"><rect x="5" y="1" width="7" height="11" rx="0.8" fill="#6ba391"/><text x="0.8" y="9" font-family="Liberation Mono, monospace" font-weight="bold" font-size="7.4" fill="#555" textLength="3.4" lengthAdjust="spacingAndGlyphs">A</text><text x="6.8" y="9" font-family="Liberation Mono, monospace" font-weight="bold" font-size="7.4" fill="#eef5f2" textLength="3.4" lengthAdjust="spacingAndGlyphs">B</text><text x="12.9" y="9" font-family="Liberation Mono, monospace" font-weight="bold" font-size="7.4" fill="#555" textLength="3.4" lengthAdjust="spacingAndGlyphs">C</text></svg>
<svg style="left:905px;top:661px;" width="10" height="6" viewBox="0 0 10 6"><path d="M0,1.5H9M0,3.5H9" stroke="#5e5e5e" stroke-width="1" fill="none"/></svg>
<div style="left:311px;top:679px;width:763px;height:19px;background:#fdee66;"></div>
<span style="top:681px;font-size:11.5px;line-height:16px;font-weight:bold;letter-spacing:0.694px;right:1369.61px;">3</span>
<span style="top:681px;font-size:11.5px;line-height:16px;font-weight:bold;letter-spacing:0.238px;left:509.5px;">Problem mit einer Software</span>
<span style="top:681px;font-size:11.5px;line-height:16px;font-weight:bold;letter-spacing:0.197px;left:705px;">Herr User Doe</span>
<span style="top:681px;font-size:11.5px;line-height:16px;font-weight:bold;letter-spacing:0.332px;left:901.5px;">17.02.2022 14:45:45</span>
<div style="left:254px;top:682px;width:13px;height:13px;background:#fff;border:1px solid #8c8c8c;box-sizing:border-box;"></div>
<svg style="left:292px;top:680px;" width="18" height="17" viewBox="0 0 18 17"><path d="M9.00,1.10 L11.06,6.47 L16.80,6.77 L12.33,10.38 L13.82,15.93 L9.00,12.80 L4.18,15.93 L5.67,10.38 L1.20,6.77 L6.94,6.47Z" fill="#e8ad4e" stroke="#e8ad4e" stroke-width="0.6" stroke-linejoin="round"/></svg>
<div style="left:251px;top:795px;width:823px;height:17px;background:#e8e8e8;"></div>
<div style="left:251px;top:795px;width:17px;height:17px;background:#f0f0f0;"></div>
<div style="left:1057px;top:795px;width:17px;height:17px;background:#f0f0f0;"></div>
<div style="left:268px;top:795px;width:525px;height:17px;background:#cdcdcd;"></div>
<span style="top:816px;font-size:11px;line-height:16px;letter-spacing:-0.050px;left:256px;">1 Einträge (0 ausgewählt)</span>
<span style="top:816px;font-size:11px;line-height:16px;letter-spacing:-0.087px;left:916px;">SQL Ausführungsdauer: 110 ms</span>
<svg style="left:252px;top:653px;" width="20" height="20" viewBox="0 0 20 20"><circle cx="10.8" cy="8.7" r="5.2" fill="none" stroke="#2f6cb0" stroke-width="1.9"/><line x1="6.82" y1="12.50" x2="1.8" y2="17.3" stroke="#2f6cb0" stroke-width="2.8" stroke-linecap="butt"/></svg>
<svg style="left:318px;top:661px;" width="10" height="6" viewBox="0 0 10 6"><path d="M0,1.5H9M0,3.5H9" stroke="#5e5e5e" stroke-width="1" fill="none"/></svg>
<svg style="left:251px;top:795px;" width="17" height="17" viewBox="0 0 17 17"><path d="M10.6,4.6L6.6,8.5L10.6,12.4" fill="none" stroke="#606060" stroke-width="1.5"/></svg>
<svg style="left:1057px;top:795px;" width="17" height="17" viewBox="0 0 17 17"><path d="M6.4,4.6L10.4,8.5L6.4,12.4" fill="none" stroke="#606060" stroke-width="1.5"/></svg>
<span style="top:570px;font-size:11px;line-height:16px;color:#333;letter-spacing:-0.285px;left:271.5px;">Suchen</span>
<div style="left:1080px;top:221px;width:820px;height:306px;background:#fff;border:1px solid #a0a0a0;box-sizing:border-box;"></div>
<div style="left:1081px;top:222px;width:800px;height:34px;background:#f0f0f0;"></div>
<svg style="left:1089px;top:229px;" width="18" height="18" viewBox="0 0 18 18"><path d="M9.6,1.2H15.2Q15.8,1.2 15.8,1.8V7.5L7.2,16.7L1,9.7Z" fill="#ababab"/><circle cx="13.5" cy="3.7" r="1" fill="#f0f0f0"/><path d="M13.8,10.3H16.9V13L13,16.9L10.3,14.5Z" fill="#808080" stroke="#f0f0f0" stroke-width="0.7"/></svg>
<span style="top:223px;font-size:22px;line-height:29px;color:#585858;left:1111.4px;-webkit-text-stroke:0.5px #f0f0f0;transform:scaleX(0.9036);transform-origin:0 50%;">Top 5 Kategorien [Letzte 12 Monate]</span>
<div style="left:1080px;top:531px;width:820px;height:306px;background:#fff;border:1px solid #a0a0a0;box-sizing:border-box;"></div>
<div style="left:1081px;top:532px;width:800px;height:34px;background:#f0f0f0;"></div>
<svg style="left:1089px;top:539px;" width="18" height="18" viewBox="0 0 18 18"><path d="M9.6,1.2H15.2Q15.8,1.2 15.8,1.8V7.5L7.2,16.7L1,9.7Z" fill="#ababab"/><circle cx="13.5" cy="3.7" r="1" fill="#f0f0f0"/><path d="M13.8,10.3H16.9V13L13,16.9L10.3,14.5Z" fill="#808080" stroke="#f0f0f0" stroke-width="0.7"/></svg>
<span style="top:533px;font-size:22px;line-height:29px;color:#585858;left:1111.4px;-webkit-text-stroke:0.5px #f0f0f0;transform:scaleX(0.8939);transform-origin:0 50%;">Offene &amp; geschlossene Tickets [Letzte 12 Monate]</span>
<svg style="left:0px;top:0px;pointer-events:none;" width="1875" height="867" viewBox="0 0 1875 867"><line x1="1096" y1="268.5" x2="1875" y2="268.5" stroke="#cfcfcf"/><line x1="1092" y1="268.5" x2="1096" y2="268.5" stroke="#000"/><line x1="1096" y1="308.5" x2="1875" y2="308.5" stroke="#cfcfcf"/><line x1="1092" y1="308.5" x2="1096" y2="308.5" stroke="#000"/><line x1="1096" y1="348.5" x2="1875" y2="348.5" stroke="#cfcfcf"/><line x1="1092" y1="348.5" x2="1096" y2="348.5" stroke="#000"/><line x1="1096" y1="388.5" x2="1875" y2="388.5" stroke="#cfcfcf"/><line x1="1092" y1="388.5" x2="1096" y2="388.5" stroke="#000"/><line x1="1096" y1="428.5" x2="1875" y2="428.5" stroke="#cfcfcf"/><line x1="1092" y1="428.5" x2="1096" y2="428.5" stroke="#000"/><line x1="1254.5" y1="268" x2="1254.5" y2="467" stroke="#cfcfcf"/><line x1="1413.5" y1="268" x2="1413.5" y2="467" stroke="#cfcfcf"/><line x1="1573.5" y1="268" x2="1573.5" y2="467" stroke="#cfcfcf"/><line x1="1732.5" y1="268" x2="1732.5" y2="467" stroke="#cfcfcf"/><rect x="1096" y="280.5" width="477.5" height="15" fill="#f0a559" stroke="#d98c3f"/><rect x="1096" y="320.5" width="158.5" height="15" fill="#f0a559" stroke="#d98c3f"/><rect x="1096" y="360.5" width="158.5" height="15" fill="#f0a559" stroke="#d98c3f"/><rect x="1096" y="400.5" width="158.5" height="15" fill="#f0a559" stroke="#d98c3f"/><rect x="1096" y="440.5" width="636.5" height="15" fill="#f0a559" stroke="#d98c3f"/><line x1="1095.5" y1="268" x2="1095.5" y2="471" stroke="#000"/><line x1="1092" y1="467.5" x2="1875" y2="467.5" stroke="#000"/><line x1="1254.5" y1="467" x2="1254.5" y2="471" stroke="#000"/><line x1="1413.5" y1="467" x2="1413.5" y2="471" stroke="#000"/><line x1="1573.5" y1="467" x2="1573.5" y2="471" stroke="#000"/><line x1="1732.5" y1="467" x2="1732.5" y2="471" stroke="#000"/></svg>
<span style="top:279px;font-size:11.5px;line-height:16px;font-weight:bold;letter-spacing:0.232px;left:1101px;text-decoration:underline;text-underline-offset:1px;">Keine Kategorie festgelegt</span>
<span style="top:319px;font-size:11.5px;line-height:16px;font-weight:bold;letter-spacing:0.730px;left:1101px;text-decoration:underline;text-underline-offset:1px;">\Hardware\Drucker\</span>
<span style="top:359px;font-size:11.5px;line-height:16px;font-weight:bold;letter-spacing:0.638px;left:1101px;text-decoration:underline;text-underline-offset:1px;">\Software\Office\</span>
<span style="top:399px;font-size:11.5px;line-height:16px;font-weight:bold;letter-spacing:0.699px;left:1101px;text-decoration:underline;text-underline-offset:1px;">\Software\SAP\</span>
<span style="top:439px;font-size:11.5px;line-height:16px;font-weight:bold;letter-spacing:0.558px;left:1101px;text-decoration:underline;text-underline-offset:1px;">\User\User Support\</span>
<span style="top:477px;font-size:11px;line-height:16px;left:594.5px;width:1000px;text-align:center;">0</span>
<span style="top:477px;font-size:11px;line-height:16px;left:753.5px;width:1000px;text-align:center;">1</span>
<span style="top:477px;font-size:11px;line-height:16px;left:912.5px;width:1000px;text-align:center;">2</span>
<span style="top:477px;font-size:11px;line-height:16px;left:1072.5px;width:1000px;text-align:center;">3</span>
<span style="top:477px;font-size:11px;line-height:16px;left:1231.5px;width:1000px;text-align:center;">4</span>
<span style="top:506px;font-size:11px;line-height:16px;color:#0b66d8;letter-spacing:-0.201px;left:1712px;">Details im Ticket Management anzeigen</span>
<svg style="left:0px;top:0px;pointer-events:none;" width="1875" height="867" viewBox="0 0 1875 867"><line x1="1112.5" y1="784.5" x2="1116.5" y2="784.5" stroke="#000"/><line x1="1116.5" y1="766.3" x2="1747.0" y2="766.3" stroke="#cfcfcf"/><line x1="1112.5" y1="766.3" x2="1116.5" y2="766.3" stroke="#000"/><line x1="1116.5" y1="748.1" x2="1747.0" y2="748.1" stroke="#cfcfcf"/><line x1="1112.5" y1="748.1" x2="1116.5" y2="748.1" stroke="#000"/><line x1="1116.5" y1="730.0" x2="1747.0" y2="730.0" stroke="#cfcfcf"/><line x1="1112.5" y1="730.0" x2="1116.5" y2="730.0" stroke="#000"/><line x1="1116.5" y1="711.8" x2="1747.0" y2="711.8" stroke="#cfcfcf"/><line x1="1112.5" y1="711.8" x2="1116.5" y2="711.8" stroke="#000"/><line x1="1116.5" y1="693.6" x2="1747.0" y2="693.6" stroke="#cfcfcf"/><line x1="1112.5" y1="693.6" x2="1116.5" y2="693.6" stroke="#000"/><line x1="1116.5" y1="675.4" x2="1747.0" y2="675.4" stroke="#cfcfcf"/><line x1="1112.5" y1="675.4" x2="1116.5" y2="675.4" stroke="#000"/><line x1="1116.5" y1="657.2" x2="1747.0" y2="657.2" stroke="#cfcfcf"/><line x1="1112.5" y1="657.2" x2="1116.5" y2="657.2" stroke="#000"/><line x1="1116.5" y1="639.0" x2="1747.0" y2="639.0" stroke="#cfcfcf"/><line x1="1112.5" y1="639.0" x2="1116.5" y2="639.0" stroke="#000"/><line x1="1116.5" y1="620.9" x2="1747.0" y2="620.9" stroke="#cfcfcf"/><line x1="1112.5" y1="620.9" x2="1116.5" y2="620.9" stroke="#000"/><line x1="1116.5" y1="602.7" x2="1747.0" y2="602.7" stroke="#cfcfcf"/><line x1="1112.5" y1="602.7" x2="1116.5" y2="602.7" stroke="#000"/><line x1="1116.5" y1="584.5" x2="1747.0" y2="584.5" stroke="#cfcfcf"/><line x1="1112.5" y1="584.5" x2="1116.5" y2="584.5" stroke="#000"/><line x1="1173.9" y1="584.0" x2="1173.9" y2="784.5" stroke="#cfcfcf"/><line x1="1231.3" y1="584.0" x2="1231.3" y2="784.5" stroke="#cfcfcf"/><line x1="1288.7" y1="584.0" x2="1288.7" y2="784.5" stroke="#cfcfcf"/><line x1="1346.1" y1="584.0" x2="1346.1" y2="784.5" stroke="#cfcfcf"/><line x1="1403.5" y1="584.0" x2="1403.5" y2="784.5" stroke="#cfcfcf"/><line x1="1460.9" y1="584.0" x2="1460.9" y2="784.5" stroke="#cfcfcf"/><line x1="1518.3" y1="584.0" x2="1518.3" y2="784.5" stroke="#cfcfcf"/><line x1="1575.7" y1="584.0" x2="1575.7" y2="784.5" stroke="#cfcfcf"/><line x1="1633.1" y1="584.0" x2="1633.1" y2="784.5" stroke="#cfcfcf"/><line x1="1690.5" y1="584.0" x2="1690.5" y2="784.5" stroke="#cfcfcf"/><line x1="1746.5" y1="584.0" x2="1746.5" y2="784.5" stroke="#cfcfcf"/><line x1="1116.5" y1="584.0" x2="1116.5" y2="785.0" stroke="#000"/><line x1="1116.5" y1="784.5" x2="1746.5" y2="784.5" stroke="#000"/><line x1="1116.5" y1="784.5" x2="1116.5" y2="788.0" stroke="#000"/><line x1="1173.9" y1="784.5" x2="1173.9" y2="788.0" stroke="#000"/><line x1="1231.3" y1="784.5" x2="1231.3" y2="788.0" stroke="#000"/><line x1="1288.7" y1="784.5" x2="1288.7" y2="788.0" stroke="#000"/><line x1="1346.1" y1="784.5" x2="1346.1" y2="788.0" stroke="#000"/><line x1="1403.5" y1="784.5" x2="1403.5" y2="788.0" stroke="#000"/><line x1="1460.9" y1="784.5" x2="1460.9" y2="788.0" stroke="#000"/><line x1="1518.3" y1="784.5" x2="1518.3" y2="788.0" stroke="#000"/><line x1="1575.7" y1="784.5" x2="1575.7" y2="788.0" stroke="#000"/><line x1="1633.1" y1="784.5" x2="1633.1" y2="788.0" stroke="#000"/><line x1="1690.5" y1="784.5" x2="1690.5" y2="788.0" stroke="#000"/><line x1="1746.5" y1="784.5" x2="1746.5" y2="788.0" stroke="#000"/><polyline points="1116.5,784.5 1173.9,784.5 1231.3,675.4 1288.7,784.5 1346.1,784.5 1403.5,784.5 1460.9,784.5 1518.3,784.5 1575.7,784.5 1633.1,784.5 1690.5,784.5 1746.5,784.5" fill="none" stroke="#6fb57d" stroke-width="2" stroke-linejoin="round"/><circle cx="1116.5" cy="784.5" r="2.8" fill="#6fb57d"/><circle cx="1173.9" cy="784.5" r="2.8" fill="#6fb57d"/><circle cx="1231.3" cy="675.4" r="2.8" fill="#6fb57d"/><circle cx="1288.7" cy="784.5" r="2.8" fill="#6fb57d"/><circle cx="1346.1" cy="784.5" r="2.8" fill="#6fb57d"/><circle cx="1403.5" cy="784.5" r="2.8" fill="#6fb57d"/><circle cx="1460.9" cy="784.5" r="2.8" fill="#6fb57d"/><circle cx="1518.3" cy="784.5" r="2.8" fill="#6fb57d"/><circle cx="1575.7" cy="784.5" r="2.8" fill="#6fb57d"/><circle cx="1633.1" cy="784.5" r="2.8" fill="#6fb57d"/><circle cx="1690.5" cy="784.5" r="2.8" fill="#6fb57d"/><circle cx="1746.5" cy="784.5" r="2.8" fill="#6fb57d"/><polyline points="1116.5,784.5 1173.9,784.5 1231.3,602.7 1288.7,784.5 1346.1,784.5 1403.5,784.5 1460.9,784.5 1518.3,784.5 1575.7,766.3 1633.1,784.5 1690.5,784.5 1746.5,784.5" fill="none" stroke="#df4a5c" stroke-width="2" stroke-linejoin="round"/><circle cx="1116.5" cy="784.5" r="2.8" fill="#df4a5c"/><circle cx="1173.9" cy="784.5" r="2.8" fill="#df4a5c"/><circle cx="1231.3" cy="602.7" r="2.8" fill="#df4a5c"/><circle cx="1288.7" cy="784.5" r="2.8" fill="#df4a5c"/><circle cx="1346.1" cy="784.5" r="2.8" fill="#df4a5c"/><circle cx="1403.5" cy="784.5" r="2.8" fill="#df4a5c"/><circle cx="1460.9" cy="784.5" r="2.8" fill="#df4a5c"/><circle cx="1518.3" cy="784.5" r="2.8" fill="#df4a5c"/><circle cx="1575.7" cy="766.3" r="2.8" fill="#df4a5c"/><circle cx="1633.1" cy="784.5" r="2.8" fill="#df4a5c"/><circle cx="1690.5" cy="784.5" r="2.8" fill="#df4a5c"/><circle cx="1746.5" cy="784.5" r="2.8" fill="#df4a5c"/><line x1="1788" y1="694" x2="1826" y2="694" stroke="#6fb57d" stroke-width="2"/><circle cx="1807" cy="694" r="2.8" fill="#6fb57d"/><line x1="1788" y1="710.5" x2="1826" y2="710.5" stroke="#df4a5c" stroke-width="2"/><circle cx="1807" cy="710.5" r="2.8" fill="#df4a5c"/></svg>
<span style="top:777px;font-size:11px;line-height:16px;right:769.2px;">0</span>
<span style="top:759px;font-size:11px;line-height:16px;right:769.2px;">1</span>
<span style="top:741px;font-size:11px;line-height:16px;right:769.2px;">2</span>
<span style="top:722px;font-size:11px;line-height:16px;right:769.2px;">3</span>
<span style="top:704px;font-size:11px;line-height:16px;right:769.2px;">4</span>
<span style="top:686px;font-size:11px;line-height:16px;right:769.2px;">5</span>
<span style="top:668px;font-size:11px;line-height:16px;right:769.2px;">6</span>
<span style="top:650px;font-size:11px;line-height:16px;right:769.2px;">7</span>
<span style="top:631px;font-size:11px;line-height:16px;right:769.2px;">8</span>
<span style="top:613px;font-size:11px;line-height:16px;right:769.2px;">9</span>
<span style="top:595px;font-size:11px;line-height:16px;right:769.2px;">10</span>
<span style="top:577px;font-size:11px;line-height:16px;right:769.2px;">11</span>
<span style="top:794px;font-size:11px;line-height:16px;letter-spacing:-0.294px;left:615.153px;width:1000px;text-align:center;">Dezember</span>
<span style="top:811px;font-size:11px;line-height:16px;letter-spacing:-0.123px;left:672.638px;width:1000px;text-align:center;">Januar</span>
<span style="top:794px;font-size:11px;line-height:16px;letter-spacing:0.010px;left:730.105px;width:1000px;text-align:center;">Februar</span>
<span style="top:811px;font-size:11px;line-height:16px;letter-spacing:-0.013px;left:787.493px;width:1000px;text-align:center;">März</span>
<span style="top:794px;font-size:11px;line-height:16px;letter-spacing:-0.023px;left:844.888px;width:1000px;text-align:center;">April</span>
<span style="top:811px;font-size:11px;line-height:16px;letter-spacing:-0.278px;left:902.161px;width:1000px;text-align:center;">Mai</span>
<span style="top:794px;font-size:11px;line-height:16px;letter-spacing:-0.322px;left:959.539px;width:1000px;text-align:center;">Juni</span>
<span style="top:811px;font-size:11px;line-height:16px;letter-spacing:-0.229px;left:1016.99px;width:1000px;text-align:center;">Juli</span>
<span style="top:794px;font-size:11px;line-height:16px;letter-spacing:0.108px;left:1074.55px;width:1000px;text-align:center;">August</span>
<span style="top:811px;font-size:11px;line-height:16px;letter-spacing:-0.157px;left:1131.82px;width:1000px;text-align:center;">September</span>
<span style="top:794px;font-size:11px;line-height:16px;letter-spacing:0.037px;left:1189.32px;width:1000px;text-align:center;">Oktober</span>
<span style="top:811px;font-size:11px;line-height:16px;letter-spacing:-0.169px;left:1245.22px;width:1000px;text-align:center;">November</span>
<span style="top:686px;font-size:11px;line-height:16px;letter-spacing:-0.227px;left:1831px;">Geschlossen</span>
<span style="top:702px;font-size:11px;line-height:16px;letter-spacing:-0.224px;left:1831px;">Offen</span>
<div style="left:0px;top:841px;width:1875px;height:1px;background:#cfe4f7;"></div>
<div style="left:0px;top:842px;width:1875px;height:23px;background:#f3f2f1;"></div>
<div style="left:0px;top:865px;width:1875px;height:2px;background:#1c1c1c;"></div>
<span style="top:847px;font-size:11px;line-height:16px;letter-spacing:-0.087px;left:1.6px;">© Aagon GmbH 2002 - 2022, all rights reserved</span>
</div></body></html>
